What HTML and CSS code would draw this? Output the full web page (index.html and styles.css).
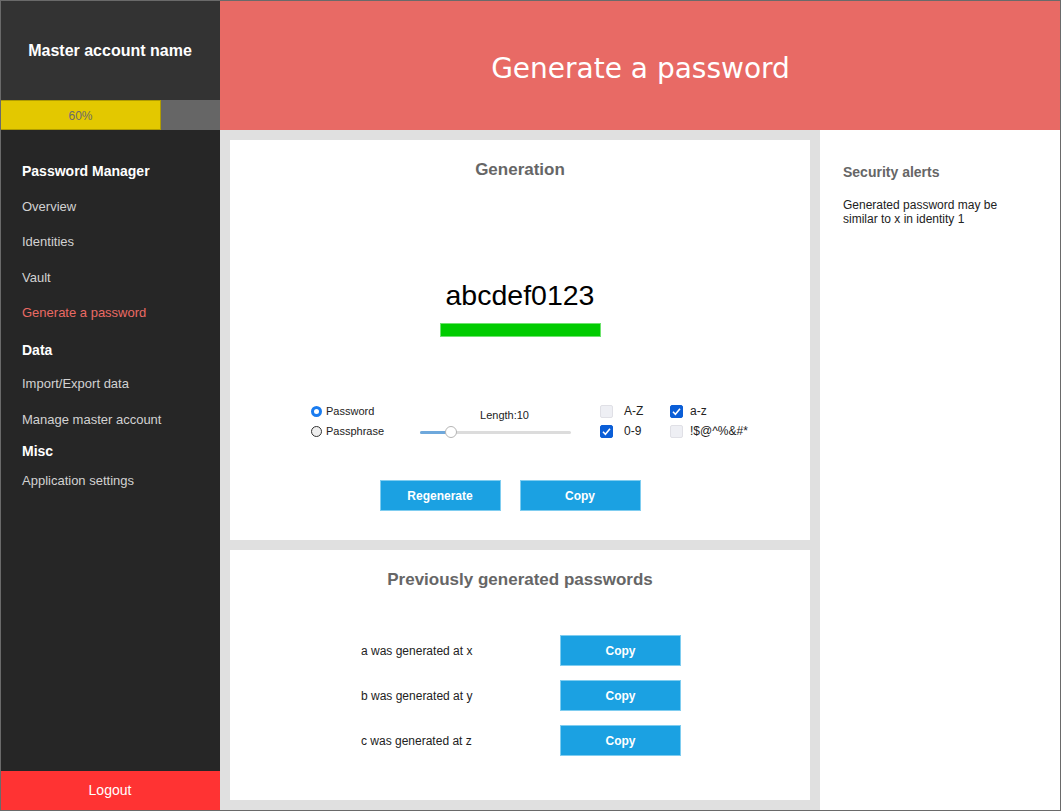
FILE: index.html
```html
<!DOCTYPE html>
<html lang="en">
<head>
<meta charset="utf-8">
<title>Generate a password</title>
<link rel="stylesheet" href="styles.css">
</head>
<body>
<div class="app">
  <aside class="sidebar">
    <div class="account">Master account name</div>
    <div class="progress"><div class="progress-fill">60%</div><div class="progress-rest"></div></div>
    <nav class="nav">
      <div class="nav-head">Password Manager</div>
      <div class="nav-item">Overview</div>
      <div class="nav-item">Identities</div>
      <div class="nav-item">Vault</div>
      <div class="nav-item active">Generate a password</div>
      <div class="nav-head data">Data</div>
      <div class="nav-item">Import/Export data</div>
      <div class="nav-item">Manage master account</div>
      <div class="nav-head misc">Misc</div>
      <div class="nav-item last">Application settings</div>
    </nav>
    <div class="logout">Logout</div>
  </aside>
  <div class="content">
    <header class="header"><h1>Generate a password</h1></header>
    <div class="body">
      <main class="main">
        <section class="card gen">
          <h2 class="card-title">Generation</h2>
          <div class="password">abcdef0123</div>
          <div class="strength"></div>
          <div class="controls">
            <div class="radios">
              <div class="radio-row"><span class="radio on"></span><span>Password</span></div>
              <div class="radio-row"><span class="radio"></span><span>Passphrase</span></div>
            </div>
            <div class="slider-group">
              <div class="slider-label">Length:10</div>
              <div class="slider">
                <div class="track"><div class="track-fill"></div></div>
                <span class="thumb"></span>
              </div>
            </div>
            <div class="checks">
              <div class="check-item"><span class="box"></span><span>A-Z</span></div>
              <div class="check-item"><span class="box on"><svg viewBox="0 0 13 13" width="13" height="13"><path d="M3 6.8 L5.4 9.2 L10 3.8" fill="none" stroke="#fff" stroke-width="1.6"/></svg></span><span>a-z</span></div>
              <div class="check-item"><span class="box on"><svg viewBox="0 0 13 13" width="13" height="13"><path d="M3 6.8 L5.4 9.2 L10 3.8" fill="none" stroke="#fff" stroke-width="1.6"/></svg></span><span>0-9</span></div>
              <div class="check-item"><span class="box"></span><span>!$@^%&amp;#*</span></div>
            </div>
          </div>
          <div class="buttons">
            <button class="btn">Regenerate</button>
            <button class="btn">Copy</button>
          </div>
        </section>
        <section class="card prev">
          <h2 class="card-title">Previously generated passwords</h2>
          <div class="history">
            <div class="hist-row"><span class="hist-text">a was generated at x</span><button class="btn">Copy</button></div>
            <div class="hist-row"><span class="hist-text">b was generated at y</span><button class="btn">Copy</button></div>
            <div class="hist-row"><span class="hist-text">c was generated at z</span><button class="btn">Copy</button></div>
          </div>
        </section>
      </main>
      <aside class="alerts">
        <h3 class="alerts-title">Security alerts</h3>
        <p class="alerts-text">Generated password may be<br>similar to x in identity 1</p>
      </aside>
    </div>
  </div>
</div>
</body>
</html>
```
FILE: styles.css
```css
* { box-sizing: border-box; }
html, body { margin: 0; padding: 0; }
body {
  font-family: "Liberation Sans", Arial, sans-serif;
  background: #fff;
}
.app {
  position: relative;
  display: grid;
  grid-template-columns: 220px 841px;
  width: 1061px;
  height: 811px;
  overflow: hidden;
}
.app::after {
  content: "";
  position: absolute;
  inset: 0;
  border: 1px solid #6a6a6a;
  pointer-events: none;
}

/* Sidebar */
.sidebar {
  display: flex;
  flex-direction: column;
  background: #262626;
  height: 811px;
}
.account {
  height: 100px;
  background: #333333;
  color: #fff;
  font-weight: bold;
  font-size: 16px;
  display: flex;
  align-items: center;
  justify-content: center;
  padding-top: 2px;
}
.progress {
  display: flex;
  height: 30px;
  background: #666666;
}
.progress-fill {
  width: 161px;
  background: #e3c800;
  border: 1px solid #b09c00;
  color: #6b6b6b;
  font-size: 12px;
  display: flex;
  align-items: center;
  justify-content: center;
  padding-top: 2px;
}
.progress-rest { flex: 1; }
.nav {
  flex: 1;
  padding-top: 23px;
  padding-left: 22px;
}
.nav-head, .nav-item {
  height: 35.5px;
  display: flex;
  align-items: center;
}
.nav-head {
  color: #fff;
  font-weight: bold;
  font-size: 14px;
}
.nav-head.data { padding-top: 3px; }
.nav-head.misc { height: 28px; }
.nav-item.last { height: 30px; }
.nav-item {
  color: #d2d2d2;
  font-size: 13px;
}
.nav-item.active { color: #ea6a64; }
.logout {
  height: 40px;
  background: #ff3333;
  color: #fff;
  font-size: 14px;
  display: flex;
  align-items: center;
  justify-content: center;
  padding-bottom: 3px;
}

/* Content */
.content {
  display: flex;
  flex-direction: column;
}
.header {
  height: 130px;
  background: #e86a65;
  display: flex;
  align-items: center;
  justify-content: center;
  padding-top: 6px;
}
.header h1 {
  margin: 0;
  font-family: "DejaVu Sans", Verdana, sans-serif;
  font-weight: normal;
  font-size: 28px;
  color: #fff;
}
.body {
  flex: 1;
  display: grid;
  grid-template-columns: 600px 241px;
}
.main {
  background: #e0e0e0;
  padding: 10px 10px 11px 10px;
  display: flex;
  flex-direction: column;
  gap: 10px;
}
.card {
  background: #fff;
  display: flex;
  flex-direction: column;
  align-items: center;
  padding-top: 20px;
}
.card.gen { height: 400px; }
.card.prev { flex: 1; }
.card-title {
  margin: 0;
  font-size: 17px;
  line-height: 20px;
  font-weight: bold;
  color: #666;
}
.password {
  margin-top: 100px;
  font-size: 28.5px;
  line-height: 30px;
  color: #000;
}
.strength {
  margin-top: 13px;
  width: 161px;
  height: 14px;
  background: #00cc00;
  border: 1px solid #6ee36e;
}
.controls {
  margin-top: 64px;
  align-self: stretch;
  padding-left: 80px;
  display: flex;
  height: 40px;
  font-size: 11px;
  color: #222;
}
.radios { width: 110px; }
.radio-row {
  height: 20px;
  display: flex;
  align-items: center;
  gap: 4px;
}
.radio {
  width: 11px;
  height: 11px;
  border-radius: 50%;
  border: 1px solid #333;
  background: #efefef;
  margin-left: 1px;
}
.radio.on {
  border: 3px solid #1a7cf0;
  background: #fff;
}
.slider-group {
  width: 151px;
  margin-right: 29px;
  padding-top: 7px;
}
.slider-label {
  text-align: center;
  line-height: 14px;
  padding-left: 18px;
}
.slider {
  position: relative;
  height: 20px;
  display: flex;
  align-items: center;
}
.track {
  width: 100%;
  height: 3px;
  background: #dcdcdc;
  border-radius: 2px;
}
.track-fill {
  width: 31px;
  height: 3px;
  background: #6ea8dc;
  border-radius: 2px;
}
.thumb {
  position: absolute;
  left: 25px;
  top: 4px;
  width: 12px;
  height: 12px;
  border-radius: 50%;
  background: #fff;
  border: 1px solid #b5b5b5;
}
.checks {
  display: grid;
  grid-template-columns: 70px 90px;
  grid-auto-rows: 20px;
  font-size: 12px;
}
.check-item {
  display: flex;
  align-items: center;
  gap: 11px;
}
.check-item:nth-child(2n) { gap: 7px; }
.box {
  width: 13px;
  height: 13px;
  border-radius: 2px;
  background: #eeeff4;
  border: 1px solid #e0e0e6;
  display: flex;
}
.box.on {
  background: #0b5ed7;
  border-color: #0b5ed7;
}
.box svg { margin: -1px; }
.buttons {
  margin-top: 39px;
  margin-right: 20px;
  display: flex;
  gap: 19px;
}
.btn {
  width: 121px;
  height: 31px;
  background: #1ba1e2;
  border: 1px solid #7fcdf0;
  color: #fff;
  font-family: "Liberation Sans", Arial, sans-serif;
  font-weight: bold;
  font-size: 12px;
  padding: 0;
}
.history {
  margin-top: 45px;
  align-self: stretch;
  padding-left: 131px;
  display: flex;
  flex-direction: column;
  gap: 14px;
}
.hist-row {
  display: flex;
  align-items: center;
}
.hist-text {
  width: 199px;
  font-size: 12px;
  color: #222;
}

/* Alerts panel */
.alerts {
  background: #fff;
  padding: 32px 20px 0 23px;
}
.alerts-title {
  margin: 0;
  font-size: 14px;
  line-height: 20px;
  font-weight: bold;
  color: #666;
}
.alerts-text {
  margin: 16px 0 0;
  font-size: 12px;
  line-height: 14px;
  color: #222;
}
```
